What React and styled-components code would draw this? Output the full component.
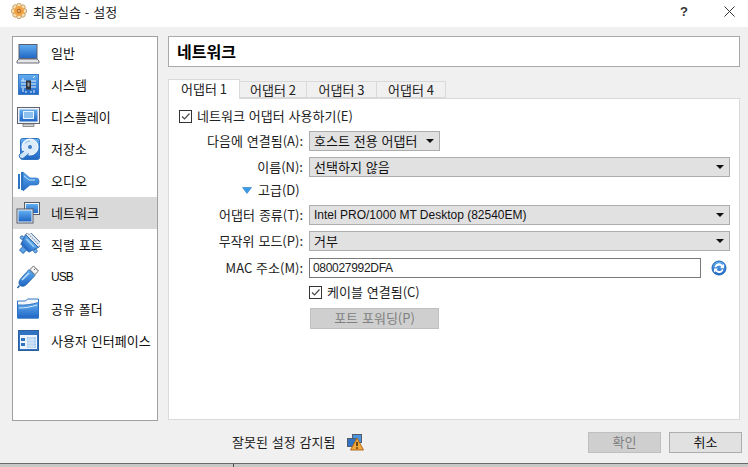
import React from 'react'
import styled, { createGlobalStyle } from 'styled-components'

const GlobalStyle = createGlobalStyle`
  html, body {
    margin: 0;
    padding: 0;
    background: #f0f0f0;
  }
  body {
    width: 748px;
    height: 467px;
    overflow: hidden;
    font-family: "Noto Sans CJK KR", "Liberation Sans", sans-serif;
    font-size: 13px;
    word-spacing: 1px;
    color: #222;
  }
`

const Window = styled.div`
  width: 748px;
  height: 467px;
  display: flex;
  flex-direction: column;
`

const TitleBar = styled.div`
  height: 27px;
  flex: none;
  background: #fff;
  display: flex;
  align-items: center;
  padding: 0 0 5px 11px;
  box-sizing: border-box;
`

const TitleText = styled.span`
  margin-left: 6px;
  flex: 1;
`

const TitleButton = styled.div`
  width: ${p => p.$w}px;
  display: flex;
  justify-content: center;
  align-items: center;
  font-family: "Liberation Sans", sans-serif;
  font-size: 13px;
  font-weight: 700;
  color: #333;
`

const Body = styled.div`
  flex: 1;
  display: flex;
  gap: 10px;
  padding: 9px 8px 0 12px;
  min-height: 0;
`

const Sidebar = styled.div`
  width: 146px;
  height: 385px;
  flex: none;
  box-sizing: border-box;
  border: 1px solid #a0a0a0;
  background: #fff;
`

const SideItem = styled.div`
  height: 32px;
  display: flex;
  align-items: center;
  padding-left: 3px;
  background: ${p => (p.$active ? '#d9d9d9' : 'transparent')};
`

const SideIcon = styled.span`
  width: 24px;
  height: 24px;
  flex: none;
  display: block;
`

const SideLabel = styled.span`
  margin-left: 11px;
  padding-bottom: ${p => (p.$latin ? 0 : 2)}px;
  color: #111;
  white-space: nowrap;
  font-family: ${p => (p.$latin ? '"Liberation Sans", sans-serif' : 'inherit')};
  font-size: ${p => (p.$latin ? '12px' : '13px')};
  letter-spacing: ${p => (p.$latin ? '-1px' : '0')};
`

const Main = styled.div`
  flex: 1;
  display: flex;
  flex-direction: column;
  min-width: 0;
`

const Header = styled.div`
  height: 31px;
  box-sizing: border-box;
  border: 1px solid #a9a9a9;
  background: #fff;
  display: flex;
  align-items: center;
  padding: 0 0 2px 8px;
  font-size: 16px;
  font-weight: 700;
  color: #000;
`

const TabBar = styled.div`
  display: flex;
  align-items: flex-end;
  height: 19px;
  margin-top: 12px;
  position: relative;
  z-index: 1;
`

const Tab = styled.div`
  width: ${p => p.$w}px;
  height: ${p => (p.$active ? 20 : 17)}px;
  box-sizing: border-box;
  border: 1px solid #d9d9d9;
  border-left-width: ${p => (p.$active ? 1 : 0)}px;
  border-bottom: ${p => (p.$active ? 'none' : '1px solid #d9d9d9')};
  background: ${p => (p.$active ? '#fff' : '#f0f0f0')};
  display: flex;
  align-items: center;
  justify-content: center;
  padding-bottom: ${p => (p.$active ? 2 : 1)}px;
  word-spacing: 0;
  margin-bottom: ${p => (p.$active ? -1 : 0)}px;
`

const Panel = styled.div`
  height: 322px;
  box-sizing: border-box;
  border: 1px solid #d9d9d9;
  background: #fff;
  padding: 7px 9px 0 9px;
`

// Korean glyphs sit low in the line box, this lifts them a pixel
const Text = styled.span`
  padding-bottom: 2px;
  white-space: nowrap;
`

const CheckLine = styled.label`
  height: 20px;
  margin-top: ${p => p.$top || 0}px;
  display: flex;
  align-items: center;
  gap: 5px;
  padding-left: ${p => p.$indent}px;
`

const Box = styled.span`
  width: 13px;
  height: 13px;
  box-sizing: border-box;
  border: 1px solid #333;
  background: #fff;
  display: flex;
  align-items: center;
  justify-content: center;
`

const Row = styled.div`
  height: 20px;
  margin-top: ${p => p.$top}px;
  display: flex;
  align-items: center;
`

const Label = styled.span`
  width: 125px;
  flex: none;
  text-align: right;
  margin-right: 6px;
  padding-bottom: 2px;
  white-space: nowrap;
`

const Select = styled.div`
  width: ${p => (p.$w ? `${p.$w}px` : 'auto')};
  flex: ${p => (p.$w ? 'none' : '1')};
  height: 20px;
  box-sizing: border-box;
  border: 1px solid #adadad;
  background: #e1e1e1;
  display: flex;
  align-items: center;
  justify-content: space-between;
  padding: 0 5px 0 4px;
  color: #111;
  white-space: nowrap;
`

const Arrow = styled.span`
  width: 0;
  height: 0;
  border-left: 4px solid transparent;
  border-right: 4px solid transparent;
  border-top: 4px solid #111;
`

const Latin = styled.span`
  font-family: "Liberation Sans", sans-serif;
  font-size: 12px;
  word-spacing: 0;
  letter-spacing: ${p => p.$track || 0}px;
`

const Advanced = styled.div`
  height: 20px;
  margin-top: 3px;
  padding-left: 64px;
  display: flex;
  align-items: center;
  gap: 6px;
`

const Tri = styled.svg`
  width: 10px;
  height: 7px;
  flex: none;
`

const MacInput = styled.div`
  width: 392px;
  height: 20px;
  box-sizing: border-box;
  border: 1px solid #7a7a7a;
  background: #fff;
  display: flex;
  align-items: center;
  padding-left: 3px;
`

const RefreshWrap = styled.span`
  width: 16px;
  height: 16px;
  margin-left: 10px;
  display: block;
`

const disabled = `
  border: 1px solid #bfbfbf;
  background-color: #cfcfcf;
  background-image: radial-gradient(#c2c2c2 0.6px, transparent 0.6px);
  background-size: 4px 4px;
  color: #808080;
`

const PortButton = styled.div`
  width: 129px;
  height: 21px;
  margin: 6px 0 0 132px;
  box-sizing: border-box;
  ${disabled}
  display: flex;
  align-items: center;
  justify-content: center;
`

const Footer = styled.div`
  height: 42px;
  flex: none;
  display: flex;
  align-items: center;
  padding: 0 6px 0 232px;
  box-sizing: border-box;
`

const Warning = styled.span`
  display: flex;
  align-items: center;
  gap: 11px;
  flex: 1;
`

const FootButton = styled.div`
  width: 73px;
  height: 21px;
  box-sizing: border-box;
  margin-left: 8px;
  border: 1px solid #adadad;
  background: #e1e1e1;
  color: #111;
  ${p => (p.$off ? disabled : '')}
  display: flex;
  align-items: center;
  justify-content: center;
`

const Strip = styled.div`
  height: 4px;
  flex: none;
  border-top: 1px solid #6a6a6a;
  background: #c8c8c8;
  box-sizing: border-box;
  padding-left: 233px;
`

const StripEdge = styled.div`
  height: 100%;
  border-left: 1px solid #4a4a4a;
`

const Defs = styled.svg`
  position: absolute;
  width: 0;
  height: 0;
`

const IconSvg = styled.svg`
  display: block;
  flex: none;
`

const Svg = ({ children }) => (
  <IconSvg width="24" height="24" viewBox="0 0 24 24">{children}</IconSvg>
)

const GeneralIcon = () => (
  <Svg>
    <rect x="3" y="3.500" width="18" height="14" fill="url(#blue)" stroke="#5a5f6e" />
    <path d="M3 18h18l2 2v2H1v-2z" fill="#e6e6e6" stroke="#6d6f78" />
  </Svg>
)

const SystemIcon = () => (
  <Svg>
    <rect x="2.500" y="1.500" width="20" height="20" fill="url(#blue)" stroke="#3d7cc4" />
    <path d="M5 8h5M5 11h5M5 14h5M15 8h5M15 11h5M15 14h5M7 5v3M17 5l2-2M7 15v4M10 18v2M15 18v2M18 17v3" stroke="#e4f0fb" strokeWidth="1" fill="none" />
    <rect x="10" y="7.500" width="5" height="9" fill="#2f3338" />
    <rect x="11.500" y="9.500" width="2" height="4" fill="#9aa3ad" />
  </Svg>
)

const DisplayIcon = () => (
  <Svg>
    <rect x="1.500" y="2.500" width="22" height="16" fill="#eef1f6" stroke="#5f6470" />
    <rect x="3.500" y="4.500" width="18" height="12" fill="url(#blue)" />
    <rect x="7.500" y="6.500" width="10" height="7" fill="#8cc0ef" stroke="#e8f3fd" />
    <path d="M7 19h11v2.500H7z" fill="#d6d6d6" stroke="#777" strokeWidth=".8" />
  </Svg>
)

const StorageIcon = () => (
  <Svg>
    <rect x="4.500" y="1.500" width="19" height="21" rx="2" fill="url(#blue)" stroke="#2f74c2" />
    <circle cx="14" cy="10" r="8" fill="#dcecfa" stroke="#fff" />
    <circle cx="14" cy="10" r="2" fill="#3d7cc4" />
    <path d="M8 14l-5 4 1 3 3 .5 6-5" fill="#cfe4f8" stroke="#2f74c2" />
    <path d="M9 6.500a6 6 0 0 1 5-2.500" stroke="#8ab8e6" fill="none" />
  </Svg>
)

const AudioIcon = () => (
  <Svg>
    <path d="M3 5v15M6 3v18" stroke="#2f74c2" strokeWidth="2" />
    <path d="M7 3l7 6h6a3 3 0 0 1 3 3v1a3 3 0 0 1-3 3h-6l-7 6z" fill="url(#blue)" stroke="#2f74c2" strokeWidth=".7" />
    <path d="M8 7l5 4h6" stroke="#c4e0fa" fill="none" />
  </Svg>
)

const NetworkIcon = () => (
  <Svg>
    <rect x="8.500" y="1.500" width="15" height="12" fill="#eef1f6" stroke="#565b68" />
    <rect x="10" y="3" width="12" height="9" fill="url(#blue)" />
    <rect x="1" y="8" width="16" height="14" fill="#eef1f6" stroke="#565b68" />
    <rect x="2.500" y="9.500" width="13" height="11" fill="url(#blue)" />
  </Svg>
)

const SerialIcon = () => (
  <Svg>
    <g transform="rotate(45 12 12)">
      <path d="M3 1.500h18v5H3z" fill="#e8eef6" stroke="#3a5f8e" strokeWidth=".9" />
      <path d="M4.500 4h15" stroke="#7f98b8" strokeWidth="1.200" strokeDasharray="1.500 1" />
      <path d="M3 6.500h18l-3.500 10h-11z" fill="url(#blue)" stroke="#1f5ca6" strokeWidth=".9" />
      <path d="M6.500 9h11" stroke="#a9d2f6" strokeWidth="1.200" />
      <path d="M9.500 16.500h5v5h-5z" fill="#5ea4e8" stroke="#1f5ca6" strokeWidth=".9" />
      <circle cx="2.500" cy="11" r="1.800" fill="#6fb0ec" stroke="#1f5ca6" strokeWidth=".7" />
      <circle cx="21.500" cy="11" r="1.800" fill="#6fb0ec" stroke="#1f5ca6" strokeWidth=".7" />
    </g>
  </Svg>
)

const UsbIcon = () => (
  <Svg>
    <path d="M17.500 1l5 5-3.600 3.600-5-5z" fill="#f5f5f5" stroke="#666" />
    <path d="M18 4l1 1M20 3.500l.8.8" stroke="#555" />
    <path d="M13 4.500l6 6-8.500 9c-2 2-5 2.400-6.600.8s-1.200-4.600.8-6.600z" fill="url(#blue)" stroke="#2663a8" strokeWidth=".8" />
    <path d="M6 15l7-7" stroke="#bfe0fb" strokeWidth="1.600" />
    <path d="M3.500 20.500L1.500 23" stroke="#2663a8" strokeWidth="1.500" />
  </Svg>
)

const FolderIcon = () => (
  <Svg>
    <path d="M1.500 4h8l2-2h11v19h-21z" fill="#f3f6fa" stroke="#2f74c2" />
    <path d="M1.500 8c8 .5 14-.5 21-2.500v15.500h-21z" fill="url(#blue)" stroke="#2f74c2" />
    <path d="M3 11c6 0 12-1 18-3" stroke="#d4e8fb" fill="none" />
  </Svg>
)

const InterfaceIcon = () => (
  <Svg>
    <rect x="2.500" y="1.500" width="20" height="20" fill="#2f74c2" stroke="#2e5f9c" />
    <rect x="4" y="6" width="17" height="14" fill="#eef4fb" />
    <rect x="5" y="9" width="4" height="3" fill="#2f74c2" />
    <rect x="5" y="14" width="4" height="3" fill="#2f74c2" />
    <rect x="11" y="8" width="9" height="11" fill="#a9cdf0" />
    <path d="M13 8v11M15 8v11M17 8v11M11 11h9M11 14h9M11 17h9" stroke="#e6f1fb" strokeWidth=".7" />
  </Svg>
)

const gearLobes = [0, 45, 90, 135, 180, 225, 270, 315]

const GearLogo = () => (
  <IconSvg width="16" height="16" viewBox="0 0 16 16">
    {gearLobes.map(a => (
      <circle key={a} cx="8" cy="2.500" r="2.300" fill="#f8e2b4" stroke="#a8702f" strokeWidth=".6" transform={`rotate(${a} 8 8)`} />
    ))}
    <circle cx="8" cy="8" r="5" fill="#f2a444" />
    <circle cx="8" cy="8" r="2.300" fill="#b9702c" />
    <circle cx="8" cy="8" r="1" fill="#e8c48a" />
  </IconSvg>
)

const Check = () => (
  <IconSvg width="11" height="11" viewBox="0 0 11 11">
    <path d="M2 5.500l2.500 2.500L9.500 2.500" fill="none" stroke="#4a4a4a" strokeWidth="1.200" />
  </IconSvg>
)

const CloseIcon = () => (
  <IconSvg width="11" height="11" viewBox="0 0 11 11">
    <path d="M.5.500l10 10M10.500.500l-10 10" stroke="#333" fill="none" />
  </IconSvg>
)

const RefreshIcon = () => (
  <IconSvg width="16" height="16" viewBox="0 0 16 16">
    <circle cx="8" cy="8" r="7" fill="url(#blue)" stroke="#1f66b8" />
    <path d="M3.500 7a4.500 4.500 0 0 1 8-2l1.500-1v4.200H9l1.300-1.200A3 3 0 0 0 5 7.500z" fill="#fff" />
    <path d="M12.500 9.500a4.500 4.500 0 0 1-8 1.800L3 12.500V8.500h4L5.800 9.800a3 3 0 0 0 5.200-.6z" fill="#fff" />
  </IconSvg>
)

const WarnIcon = () => (
  <IconSvg width="17" height="17" viewBox="0 0 17 17">
    <rect x="5.500" y=".5" width="9" height="8" fill="#4a94e0" stroke="#555b68" />
    <rect x=".5" y="4.500" width="9" height="8" fill="#2f74c2" stroke="#555b68" />
    <path d="M10 4l6.500 12h-13z" fill="#f3a93a" stroke="#a8601a" strokeWidth=".9" />
    <path d="M10 8v4M10 13.200v1.500" stroke="#3a2410" strokeWidth="1.500" />
  </IconSvg>
)

const items = [
  { label: '일반', Icon: GeneralIcon },
  { label: '시스템', Icon: SystemIcon },
  { label: '디스플레이', Icon: DisplayIcon },
  { label: '저장소', Icon: StorageIcon },
  { label: '오디오', Icon: AudioIcon },
  { label: '네트워크', Icon: NetworkIcon, active: true },
  { label: '직렬 포트', Icon: SerialIcon },
  { label: 'USB', Icon: UsbIcon, latin: true },
  { label: '공유 폴더', Icon: FolderIcon },
  { label: '사용자 인터페이스', Icon: InterfaceIcon },
]

export default function App() {
  return (
    <Window>
      <GlobalStyle />
      <Defs>
        <defs>
          <linearGradient id="blue" x1="0" y1="0" x2="0" y2="1">
            <stop offset="0" stopColor="#62aef0" />
            <stop offset="1" stopColor="#1f66c4" />
          </linearGradient>
        </defs>
      </Defs>
      <TitleBar>
        <GearLogo />
        <TitleText>최종실습 - 설정</TitleText>
        <TitleButton $w={52}>?</TitleButton>
        <TitleButton $w={38}><CloseIcon /></TitleButton>
      </TitleBar>
      <Body>
        <Sidebar>
          {items.map(({ label, Icon, active, latin }) => (
            <SideItem key={label} $active={active}>
              <SideIcon><Icon /></SideIcon>
              <SideLabel $latin={latin}>{label}</SideLabel>
            </SideItem>
          ))}
        </Sidebar>
        <Main>
          <Header>네트워크</Header>
          <TabBar>
            <Tab $active $w={72}>어댑터 1</Tab>
            <Tab $w={67}>어댑터 2</Tab>
            <Tab $w={70}>어댑터 3</Tab>
            <Tab $w={69}>어댑터 4</Tab>
          </TabBar>
          <Panel>
            <CheckLine $indent={1}>
              <Box><Check /></Box>
              <Text>네트워크 어댑터 사용하기(E)</Text>
            </CheckLine>
            <Row $top={5}>
              <Label>다음에 연결됨(A):</Label>
              <Select $w={131}><Text>호스트 전용 어댑터</Text><Arrow /></Select>
            </Row>
            <Row $top={6}>
              <Label>이름(N):</Label>
              <Select><Text>선택하지 않음</Text><Arrow /></Select>
            </Row>
            <Advanced>
              <Tri viewBox="0 0 10 7">
                <path d="M.5.500h9L5 6.500z" fill="#3c9be8" stroke="#2a7cc4" strokeWidth=".6" />
              </Tri>
              <Text>고급(D)</Text>
            </Advanced>
            <Row $top={5}>
              <Label>어댑터 종류(T):</Label>
              <Select><Latin>Intel PRO/1000 MT Desktop (82540EM)</Latin><Arrow /></Select>
            </Row>
            <Row $top={6}>
              <Label>무작위 모드(P):</Label>
              <Select><Text>거부</Text><Arrow /></Select>
            </Row>
            <Row $top={7}>
              <Label>MAC 주소(M):</Label>
              <MacInput><Latin $track={-0.3}>080027992DFA</Latin></MacInput>
              <RefreshWrap><RefreshIcon /></RefreshWrap>
            </Row>
            <CheckLine $indent={131} $top={4}>
              <Box><Check /></Box>
              <Text>케이블 연결됨(C)</Text>
            </CheckLine>
            <PortButton><Text>포트 포워딩(P)</Text></PortButton>
          </Panel>
        </Main>
      </Body>
      <Footer>
        <Warning>
          <Text>잘못된 설정 감지됨</Text>
          <WarnIcon />
        </Warning>
        <FootButton $off><Text>확인</Text></FootButton>
        <FootButton><Text>취소</Text></FootButton>
      </Footer>
      <Strip><StripEdge /></Strip>
    </Window>
  )
}
